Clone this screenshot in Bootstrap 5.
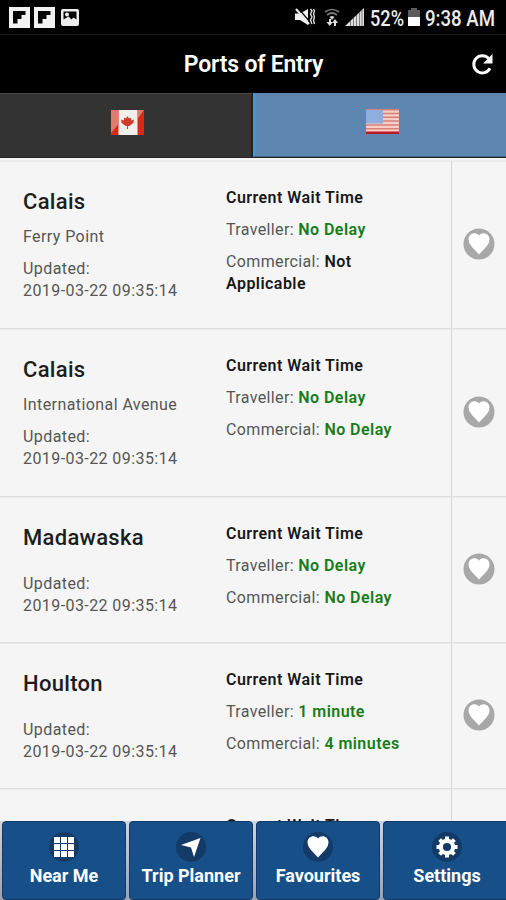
<!DOCTYPE html>
<html lang="en">
<head>
<meta charset="utf-8">
<meta name="viewport" content="width=device-width, initial-scale=1">
<title>Ports of Entry</title>
<link href="https://cdn.jsdelivr.net/npm/bootstrap@5.3.0/dist/css/bootstrap.min.css" rel="stylesheet">
<style>
body{font-family:Roboto,"Liberation Sans",sans-serif;font-size:16px;line-height:22px;color:#555;background:#f5f5f5}
svg{display:block;flex:none}
.app{width:506px;height:900px}
.status{height:35px;border-bottom:1px solid #202020;background:#000;padding:0 11px 0 9px}
.status text{fill:#ececec;font-size:21.5px;font-weight:500}
.topbar{height:58px;background:#000;color:#fff;display:grid;grid-template-columns:50px 1fr 50px}
.topbar h1{font-size:23px;font-weight:600;letter-spacing:-.2px;padding:1px 0 0 1px}
.tabs{height:65px;background:#222;padding-bottom:1px}
.tab-ca{background:#333;width:252px;border-right:1px solid #222;border-top:1px solid #484848}
.tab-us{background:#5d87b0;margin-left:1px;border-left:2px solid #429bd4;border-bottom:1px solid #3f6285}
.tabs svg{margin:-6px 0 0 4px}
.ports{padding-top:2px}
.port{border-top:1px solid #dedede;box-shadow:inset 0 1px #ececec;height:146px;flex:none}
.port.tall{height:168px}
.port:first-child{border-color:#ededed}
.place{width:226px;padding:28.5px 0 0 23px;letter-spacing:.42px}
.wait{width:225px;padding:26px 20px 0 0;letter-spacing:.36px}
.port h2{font-size:22px;font-weight:500;line-height:24px;letter-spacing:.3px;margin:0 0 12.5px;color:#1d1d1d}
.port p{margin:0 0 10px}
.port p.gap{height:.5px;margin-bottom:10px}
.port b{font-weight:600;letter-spacing:.45px;color:#181818}
.port b.go{color:#187c18}
.fav{border-left:1px solid #d6d6d6;width:55px;padding:0 0 2px 0}
.dock{height:79px;padding:0 0 0 2px;gap:3px;background:linear-gradient(#cfd3dc,#9ca2b3)}
.dock a{background:#174f88;border:1px solid #123968;border-radius:4px;color:#fff;font-size:18px;font-weight:700;text-decoration:none;padding-top:9px;flex:none;width:124px}
.dock a:last-child{width:127px;border-right:0;border-radius:4px 0 0 4px}
.dock span{line-height:22px;margin-top:2px}
</style>
</head>
<body>
<svg width="0" height="0" class="position-absolute">
<symbol id="heart" viewBox="0 0 32 32"><path d="M16 26.500L8.500 18.500Q5.500 15 5.500 11.500C5.500 5 13 3.500 16 7.500C19 3.500 26.500 5 26.500 11.500Q26.500 15 23.500 18.500Z" fill="#fff"/></symbol>
<symbol id="flip" viewBox="0 0 21 21"><path d="M0 0h21v21H0z" fill="#f2f2f2"/><path d="M4 4h12.500v4h-4v4h-4v4.500H4z" fill="#050505"/></symbol>
</svg>
<div class="app d-flex flex-column overflow-hidden">
  <div class="status d-flex align-items-center flex-shrink-0">
    <svg class="ms-0" width="21" height="21"><use href="#flip"/></svg>
    <svg class="ms-1" width="21" height="21"><use href="#flip"/></svg>
    <svg style="margin-left:6px" width="18" height="17"><rect width="18" height="17" rx="2" fill="#eee"/><path d="M2.500 2.500h13v8l-3-2-2 2-3-3-5 3z" fill="#080808"/><circle cx="6" cy="5.500" r="2" fill="#eee"/></svg>
    <div class="ms-auto d-flex align-items-center">
      <svg width="20" height="18" viewBox="0 0 20 18"><path d="M0 5.500h5L13 1v16l-8-5H0z" fill="#eee"/><path d="M3 0l12 14" stroke="#000" stroke-width="1.200"/><path d="M1 1l13 15" stroke="#eee" stroke-width="2"/><path d="M15.500 1l1.500 2-1.500 3 1.500 3-1.500 3 1.500 4M18.500 1l1 2-1 3 1 3-1 3 1 4" stroke="#ddd" stroke-width="1.400" fill="none"/></svg>
      <svg style="margin-left:9px" width="16" height="19" viewBox="0 0 16 19"><path d="M1 4q7-5 14 0M3 7q5-4 10 0" stroke="#777" stroke-width="1.700" fill="none"/><path d="M5.500 9q2.500-2 5 0L8 12z" fill="#ccc"/><path d="M5 11v3H2.500L5.700 18 9 14H7v-3zM10 18v-3H8l3-4 3 4h-2v3z" fill="#ddd"/></svg>
      <svg style="margin-left:5px" width="20" height="19" viewBox="0 0 20 19"><path d="M0 18L19 0v18z" fill="#ddd"/><path d="M5.500 13v5M8.500 10v8M11.500 7v11M14.500 4v14M17 2v16" stroke="#555" stroke-width=".7"/></svg>
      <svg style="margin-left:4px" width="37" height="34" viewBox="0 0 37 34"><text x="1" y="25.500" textLength="34" lengthAdjust="spacingAndGlyphs">52%</text></svg>
      <svg style="margin-left:2px" width="12" height="18"><path d="M3 0h6v2h3v7H0V2h3z" fill="#5c5c5c"/><path d="M0 9h12v9H0z" fill="#fff"/></svg>
      <svg style="margin:0 -2px 0 4px" width="73" height="34" viewBox="0 0 73 34"><text x="1" y="25.500" textLength="70" lengthAdjust="spacingAndGlyphs">9:38 AM</text></svg>
    </div>
  </div>
  <header class="topbar align-items-center flex-shrink-0">
    <h1 class="m-0 text-center" style="grid-column:2">Ports of Entry</h1>
    <svg width="23" height="23" viewBox="0 0 23 23" style="margin-left:15px"><path d="M17.800 5.600A8.600 8.600 0 1 0 19 15.300" fill="none" stroke="#fff" stroke-width="3"/><path d="M21.500 1v9.500H12z" fill="#fff"/></svg>
  </header>
  <nav class="tabs d-flex flex-shrink-0">
    <a class="tab-ca d-flex align-items-center justify-content-center" href="#" aria-label="Canada"><svg width="33" height="25" viewBox="0 0 33 25"><path d="M0 0h33v25H0z" fill="#f2eeeb"/><path d="M0 0h7.500v25H0zM26.500 0H33v25h-6.500z" fill="#d92a18"/><path d="M0 0h7.500v14L0 23zM27 0h6l-6 8z" fill="#e07b6e"/><path d="M16.500 6l1.500 2.500 2-1v3l3-1-.7 3.500-4 3h-3.600l-4-3L10 9.500l3 1v-3l2 1zM16 16h1v3h-1z" fill="#d33a28"/></svg></a>
    <a class="tab-us flex-fill d-flex align-items-center justify-content-center" href="#" aria-label="United States"><svg width="33" height="25" viewBox="0 0 34 25" preserveAspectRatio="none"><path d="M0 0h34v25H0z" fill="#f6cec5"/><path d="M0 .7h34M0 4.500h34M0 8.300h34M0 12.100h34M0 16h34M0 19.800h34" stroke="#d88078" stroke-width="1.500"/><path d="M0 23.700h34" stroke="#bd1826" stroke-width="2.600"/><path d="M0 1h17.500v13.500H0z" fill="#8faee0"/></svg></a>
  </nav>
  <main class="ports d-flex flex-column flex-fill overflow-hidden">
    <section class="port tall d-flex">
      <div class="place"><h2>Calais</h2><p>Ferry Point</p><p>Updated:<br>2019-03-22 09:35:14</p></div>
      <div class="wait"><p><b>Current Wait Time</b></p><p>Traveller: <b class="go">No Delay</b></p><p>Commercial: <b>Not<br>Applicable</b></p></div>
      <div class="fav d-flex align-items-center justify-content-center"><svg width="32" height="32"><circle cx="16" cy="16" r="15.500" fill="#a8a8a8"/><use href="#heart"/></svg></div>
    </section>
    <section class="port tall d-flex">
      <div class="place"><h2>Calais</h2><p>International Avenue</p><p>Updated:<br>2019-03-22 09:35:14</p></div>
      <div class="wait"><p><b>Current Wait Time</b></p><p>Traveller: <b class="go">No Delay</b></p><p>Commercial: <b class="go">No Delay</b></p></div>
      <div class="fav d-flex align-items-center justify-content-center"><svg width="32" height="32"><circle cx="16" cy="16" r="15.500" fill="#a8a8a8"/><use href="#heart"/></svg></div>
    </section>
    <section class="port d-flex">
      <div class="place"><h2>Madawaska</h2><p class="gap"></p><p>Updated:<br>2019-03-22 09:35:14</p></div>
      <div class="wait"><p><b>Current Wait Time</b></p><p>Traveller: <b class="go">No Delay</b></p><p>Commercial: <b class="go">No Delay</b></p></div>
      <div class="fav d-flex align-items-center justify-content-center"><svg width="32" height="32"><circle cx="16" cy="16" r="15.500" fill="#a8a8a8"/><use href="#heart"/></svg></div>
    </section>
    <section class="port d-flex">
      <div class="place"><h2>Houlton</h2><p class="gap"></p><p>Updated:<br>2019-03-22 09:35:14</p></div>
      <div class="wait"><p><b>Current Wait Time</b></p><p>Traveller: <b class="go">1 minute</b></p><p>Commercial: <b class="go">4 minutes</b></p></div>
      <div class="fav d-flex align-items-center justify-content-center"><svg width="32" height="32"><circle cx="16" cy="16" r="15.500" fill="#a8a8a8"/><use href="#heart"/></svg></div>
    </section>
    <section class="port d-flex">
      <div class="place"><h2>Derby Line</h2></div>
      <div class="wait"><p><b>Current Wait Time</b></p></div>
      <div class="fav"></div>
    </section>
  </main>
  <nav class="dock d-flex flex-shrink-0">
    <a href="#" class="d-flex flex-column align-items-center"><svg width="32" height="32"><circle cx="16" cy="16" r="15" fill="#143a67"/><path d="M6 6h6v6H6zM13 6h6v6h-6zM20 6h6v6h-6zM6 13h6v6H6zM13 13h6v6h-6zM20 13h6v6h-6zM6 20h6v6H6zM13 20h6v6h-6zM20 20h6v6h-6z" fill="#fff"/></svg><span>Near Me</span></a>
    <a href="#" class="d-flex flex-column align-items-center"><svg width="32" height="32"><circle cx="16" cy="16" r="15" fill="#143a67"/><path d="M25.500 7L19 26l-3-9.500L6 14z" fill="#fff"/></svg><span>Trip Planner</span></a>
    <a href="#" class="d-flex flex-column align-items-center"><svg width="32" height="32"><circle cx="16" cy="16" r="15" fill="#143a67"/><use href="#heart"/></svg><span>Favourites</span></a>
    <a href="#" class="d-flex flex-column align-items-center"><svg width="32" height="32"><circle cx="16" cy="16" r="15" fill="#143a67"/><circle cx="16" cy="16" r="6.200" fill="none" stroke="#fff" stroke-width="4.200"/><path d="M16 5.500v4M16 22.500v4M5.500 16h4M22.500 16h4M8.600 8.600l2.800 2.800M20.600 20.600l2.800 2.800M8.600 23.400l2.800-2.800M20.600 11.400l2.800-2.800" stroke="#fff" stroke-width="4"/></svg><span>Settings</span></a>
  </nav>
</div>
<script src="https://cdn.jsdelivr.net/npm/bootstrap@5.3.0/dist/js/bootstrap.bundle.min.js"></script>
</body>
</html>
